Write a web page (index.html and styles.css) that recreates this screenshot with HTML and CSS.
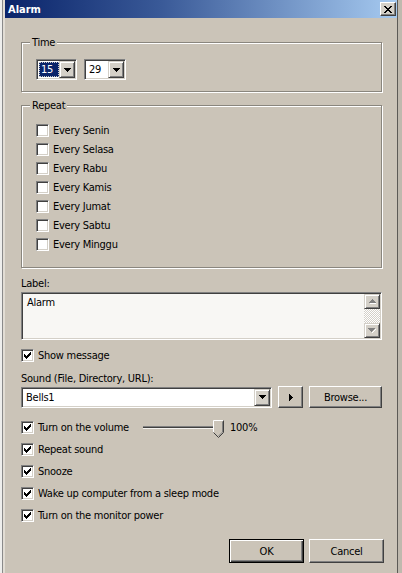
FILE: index.html
```html
<!DOCTYPE html>
<html>
<head>
<meta charset="utf-8">
<title>Alarm</title>
<link rel="stylesheet" href="styles.css">
</head>
<body>
<div class="screen">
  <div class="edge-left"></div>
  <div class="window">
    <div class="titlebar">
      <span class="title">Alarm</span>
      <span class="close"><svg width="8" height="7" viewBox="0 0 8 7"><path fill="#000" d="M0 0h2v1H0zM6 0h2v1H6zM1 1h2v1H1zM5 1h2v1H5zM2 2h4v1H2zM3 3h2v1H3zM2 4h4v1H2zM1 5h2v1H1zM5 5h2v1H5zM0 6h2v1H0zM6 6h2v1H6z"/></svg></span>
    </div>
    <div class="content">
      <div class="group">
        <div class="legend">Time</div>
        <div class="time-row">
          <div class="combo combo-hour">
            <div class="combo-text"><span class="sel">15</span></div>
            <span class="combo-btn"><svg width="7" height="4" viewBox="0 0 7 4"><path fill="#000" d="M0 0h7v1H0zM1 1h5v1H1zM2 2h3v1H2zM3 3h1v1H3z"/></svg></span>
          </div>
          <div class="combo combo-min">
            <div class="combo-text"><span class="val">29</span></div>
            <span class="combo-btn"><svg width="7" height="4" viewBox="0 0 7 4"><path fill="#000" d="M0 0h7v1H0zM1 1h5v1H1zM2 2h3v1H2zM3 3h1v1H3z"/></svg></span>
          </div>
        </div>
      </div>

      <div class="group group-repeat">
        <div class="legend">Repeat</div>
        <div class="checklist">
          <div class="day"><span class="box"></span><span>Every Senin</span></div>
          <div class="day"><span class="box"></span><span>Every Selasa</span></div>
          <div class="day"><span class="box"></span><span>Every Rabu</span></div>
          <div class="day"><span class="box"></span><span>Every Kamis</span></div>
          <div class="day"><span class="box"></span><span>Every Jumat</span></div>
          <div class="day"><span class="box"></span><span>Every Sabtu</span></div>
          <div class="day"><span class="box"></span><span>Every Minggu</span></div>
        </div>
      </div>

      <div class="field-label label-label">Label:</div>
      <div class="memo">
        <div class="memo-text">Alarm</div>
        <div class="vscroll">
          <span class="sbtn"><svg width="7" height="5" viewBox="0 0 7 5"><path fill="#fff" d="M4 1h1v1H4zM5 2h1v1H5zM6 3h1v1H6zM1 4h7v1H1z"/><path fill="#808080" d="M3 0h1v1H3zM2 1h3v1H2zM1 2h5v1H1zM0 3h7v1H0z"/></svg></span>
          <span class="strack"></span>
          <span class="sbtn"><svg width="8" height="5" viewBox="0 0 8 5"><path fill="#fff" d="M7 1h1v1H7zM6 2h1v1H6zM5 3h1v1H5zM4 4h1v1H4z"/><path fill="#808080" d="M0 0h7v1H0zM1 1h5v1H1zM2 2h3v1H2zM3 3h1v1H3z"/></svg></span>
        </div>
      </div>

      <div class="opt opt-show"><span class="box"><svg width="7" height="7" viewBox="0 0 7 7"><path fill="#000" d="M6 0h1v1H6zM5 1h2v1H5zM0 2h1v1H0zM4 2h3v1H4zM0 3h2v1H0zM3 3h3v1H3zM0 4h5v1H0zM1 5h3v1H1zM2 6h1v1H2z"/></svg></span><span>Show message</span></div>

      <div class="field-label label-sound">Sound (File, Directory, URL):</div>
      <div class="sound-row">
        <div class="combo combo-sound">
          <div class="combo-text"><span class="val">Bells1</span></div>
          <span class="combo-btn"><svg width="7" height="4" viewBox="0 0 7 4"><path fill="#000" d="M0 0h7v1H0zM1 1h5v1H1zM2 2h3v1H2zM3 3h1v1H3z"/></svg></span>
        </div>
        <span class="btn btn-play"><svg width="4" height="7" viewBox="0 0 4 7"><path fill="#000" d="M0 0h1v7H0zM1 1h1v5H1zM2 2h1v3H2zM3 3h1v1H3z"/></svg></span>
        <span class="btn btn-browse">Browse...</span>
      </div>

      <div class="volume-row">
        <div class="opt opt-volume"><span class="box"><svg width="7" height="7" viewBox="0 0 7 7"><path fill="#000" d="M6 0h1v1H6zM5 1h2v1H5zM0 2h1v1H0zM4 2h3v1H4zM0 3h2v1H0zM3 3h3v1H3zM0 4h5v1H0zM1 5h3v1H1zM2 6h1v1H2z"/></svg></span><span>Turn on the volume</span></div>
        <svg class="slider" width="81" height="22" viewBox="0 0 81 22">
          <rect x="0" y="9" width="74" height="1" fill="#808080"/>
          <rect x="0" y="10" width="74" height="1" fill="#404040"/>
          <rect x="0" y="11" width="74" height="1" fill="#f4f2ee"/>
          <polygon points="70.5,3.5 80.5,3.5 80.5,15.5 75.5,20.5 70.5,15.5" fill="#cbc4b8"/>
          <polyline points="70.5,15.5 70.5,3.5 80.5,3.5" fill="none" stroke="#ffffff" stroke-width="1"/>
          <polyline points="80.5,3.5 80.5,15.5 75.5,20.5 70.5,15.5" fill="none" stroke="#404040" stroke-width="1"/>
          <polyline points="79.5,4.5 79.5,15 75.5,19" fill="none" stroke="#808080" stroke-width="1"/>
        </svg>
        <span class="pct">100%</span>
      </div>

      <div class="opt"><span class="box"><svg width="7" height="7" viewBox="0 0 7 7"><path fill="#000" d="M6 0h1v1H6zM5 1h2v1H5zM0 2h1v1H0zM4 2h3v1H4zM0 3h2v1H0zM3 3h3v1H3zM0 4h5v1H0zM1 5h3v1H1zM2 6h1v1H2z"/></svg></span><span>Repeat sound</span></div>
      <div class="opt"><span class="box"><svg width="7" height="7" viewBox="0 0 7 7"><path fill="#000" d="M6 0h1v1H6zM5 1h2v1H5zM0 2h1v1H0zM4 2h3v1H4zM0 3h2v1H0zM3 3h3v1H3zM0 4h5v1H0zM1 5h3v1H1zM2 6h1v1H2z"/></svg></span><span>Snooze</span></div>
      <div class="opt"><span class="box"><svg width="7" height="7" viewBox="0 0 7 7"><path fill="#000" d="M6 0h1v1H6zM5 1h2v1H5zM0 2h1v1H0zM4 2h3v1H4zM0 3h2v1H0zM3 3h3v1H3zM0 4h5v1H0zM1 5h3v1H1zM2 6h1v1H2z"/></svg></span><span>Wake up computer from a sleep mode</span></div>
      <div class="opt"><span class="box"><svg width="7" height="7" viewBox="0 0 7 7"><path fill="#000" d="M6 0h1v1H6zM5 1h2v1H5zM0 2h1v1H0zM4 2h3v1H4zM0 3h2v1H0zM3 3h3v1H3zM0 4h5v1H0zM1 5h3v1H1zM2 6h1v1H2z"/></svg></span><span>Turn on the monitor power</span></div>

      <div class="buttons">
        <span class="btn btn-ok">OK</span>
        <span class="btn btn-cancel">Cancel</span>
      </div>
    </div>
  </div>
  <div class="edge-right"></div>
</div>
</body>
</html>
```

FILE: styles.css
```css
* { box-sizing: border-box; }
html, body { margin: 0; padding: 0; }
body {
  width: 402px;
  height: 573px;
  overflow: hidden;
  background: #cbc4b8;
  font-family: "DejaVu Sans Condensed", "Liberation Sans", sans-serif;
  font-size: 11px;
  line-height: 13px;
  letter-spacing: -0.25px;
  color: #000;
}
.screen { display: flex; height: 573px; }
.edge-left {
  width: 3px;
  flex: none;
  background: #eeeeec;
  border-right: 1px solid #8a8a8a;
}
.edge-right {
  width: 4px;
  flex: none;
  background: #bfb9ae;
}
.window {
  flex: 1;
  display: flex;
  flex-direction: column;
  border-left: 2px solid #e2ddd4;
  border-right: 1px solid #5c5a56;
  background: #cbc4b8;
}
.titlebar {
  height: 18px;
  flex: none;
  display: flex;
  align-items: center;
  padding-left: 3px;
  background: linear-gradient(to right, #0a246a 0%, #3a5a98 40%, #a6caf0 100%);
}
.title {
  color: #fff;
  font-weight: bold;
  font-size: 11px;
  letter-spacing: 0;
}
.close {
  margin-left: auto;
  margin-right: 1px;
  width: 16px;
  height: 14px;
  display: flex;
  align-items: center;
  justify-content: center;
  background: #d4d0c8;
  border: 1px solid;
  border-color: #fff #404040 #404040 #fff;
  box-shadow: inset -1px -1px #808080;
}
.content {
  flex: 1;
  display: flex;
  flex-direction: column;
  padding: 24px 15px 0 16px;
}
.group {
  display: flex;
  flex-direction: column;
  align-items: flex-start;
  border: 1px solid #8a867e;
  box-shadow: inset 1px 1px #fff, 1px 1px #fff;
}
.group-repeat { margin-top: 13px; }
.legend {
  margin: -7px 0 0 8px;
  padding: 0 2px;
  background: #cbc4b8;
  line-height: 13px;
}
.time-row {
  display: flex;
  gap: 7px;
  margin: 10px 0 11px 14px;
}
.combo {
  display: flex;
  height: 21px;
  background: #fff;
  border: 1px solid;
  border-color: #808080 #fff #fff #808080;
  box-shadow: inset 1px 1px #404040, inset -1px -1px #d4d0c8;
  padding: 1px;
}
.combo-hour { width: 41px; }
.combo-min { width: 42px; }
.combo-sound { width: 251px; }
.combo-text {
  flex: 1;
  display: flex;
  align-items: center;
  padding-left: 1px;
}
.sel {
  display: inline-block;
  height: 15px;
  line-height: 13px;
  padding: 1px 2px 0 2px;
  background: #0a246a;
  color: #fff;
  outline: 1px dotted #c8c8c8;
  outline-offset: -1px;
  width: 20px;
}
.val { padding-left: 2px; }
.combo-btn {
  width: 16px;
  flex: none;
  display: flex;
  align-items: center;
  justify-content: center;
  background: #d4d0c8;
  border: 1px solid;
  border-color: #d4d0c8 #404040 #404040 #d4d0c8;
  box-shadow: inset 1px 1px #fff, inset -1px -1px #808080;
}
.checklist {
  display: flex;
  flex-direction: column;
  margin: 9px 0 13px 14px;
}
.day {
  display: flex;
  align-items: center;
  gap: 4px;
  height: 19px;
}
.box {
  width: 13px;
  height: 13px;
  flex: none;
  display: flex;
  align-items: center;
  justify-content: center;
  background: #fff;
  border: 1px solid;
  border-color: #808080 #fff #fff #808080;
  box-shadow: inset 1px 1px #404040, inset -1px -1px #d4d0c8;
}
.field-label { line-height: 13px; }
.label-label { margin-top: 9px; }
.label-sound { margin-top: 7px; }
.memo {
  margin-top: 2px;
  height: 48px;
  display: flex;
  background: #f8f7f4;
  border: 1px solid;
  border-color: #808080 #fff #fff #808080;
  box-shadow: inset 1px 1px #404040, inset -1px -1px #d4d0c8;
}
.memo-text {
  flex: 1;
  padding: 3px 5px;
}
.vscroll {
  width: 16px;
  margin: 1px 1px 1px 0;
  display: flex;
  flex-direction: column;
}
.sbtn {
  height: 15px;
  flex: none;
  display: flex;
  align-items: center;
  justify-content: center;
  background: #d4d0c8;
  border: 1px solid;
  border-color: #d4d0c8 #404040 #404040 #d4d0c8;
  box-shadow: inset 1px 1px #fff, inset -1px -1px #808080;
}
.strack {
  flex: 1;
  background: repeating-conic-gradient(#ffffff 0 25%, #d4d0c8 0 50%) 0 0 / 2px 2px;
}
.opt {
  display: flex;
  align-items: center;
  gap: 4px;
  height: 22px;
}
.opt-show { margin-top: 6px; height: 19px; }
.sound-row {
  display: flex;
  align-items: center;
  height: 22px;
  margin-top: 1px;
}
.btn {
  display: flex;
  align-items: center;
  justify-content: center;
  background: #cbc4b8;
  border: 1px solid;
  border-color: #fff #404040 #404040 #fff;
  box-shadow: inset -1px -1px #808080;
}
.btn-play { width: 25px; height: 22px; margin-left: 6px; }
.btn-browse { width: 73px; height: 22px; margin-left: 6px; }
.volume-row {
  display: flex;
  align-items: center;
  height: 21px;
  margin-top: 9px;
}
.opt-volume { width: 122px; height: 21px; }
.slider { flex: none; display: block; }
.pct { margin-left: 6px; }
.buttons {
  display: flex;
  justify-content: flex-end;
  gap: 5px;
  margin-top: 13px;
  margin-right: -2px;
}
.btn-ok, .btn-cancel { width: 75px; height: 24px; }
.btn-ok {
  border: 1px solid #000;
  box-shadow: inset 1px 1px #fff, inset -1px -1px #404040, inset -2px -2px #808080;
}
```
